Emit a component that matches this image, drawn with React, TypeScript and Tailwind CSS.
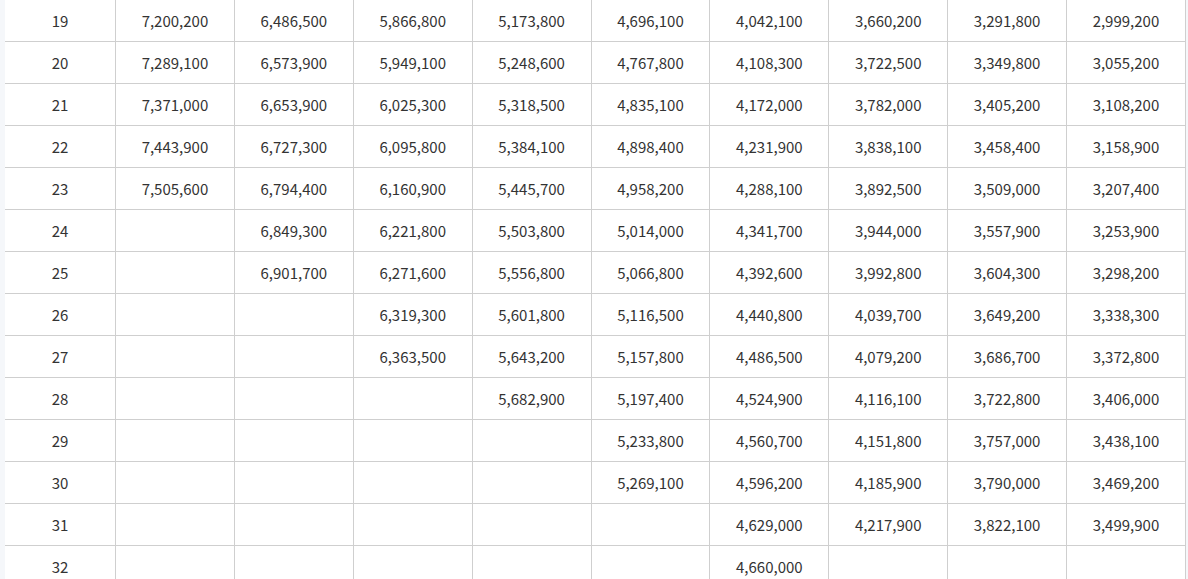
import React from 'react'

// 호봉별 금액 (빈 칸은 해당 호봉 없음)
const rows: [number, string[]][] = [
  [19, ['7,200,200', '6,486,500', '5,866,800', '5,173,800', '4,696,100', '4,042,100', '3,660,200', '3,291,800', '2,999,200']],
  [20, ['7,289,100', '6,573,900', '5,949,100', '5,248,600', '4,767,800', '4,108,300', '3,722,500', '3,349,800', '3,055,200']],
  [21, ['7,371,000', '6,653,900', '6,025,300', '5,318,500', '4,835,100', '4,172,000', '3,782,000', '3,405,200', '3,108,200']],
  [22, ['7,443,900', '6,727,300', '6,095,800', '5,384,100', '4,898,400', '4,231,900', '3,838,100', '3,458,400', '3,158,900']],
  [23, ['7,505,600', '6,794,400', '6,160,900', '5,445,700', '4,958,200', '4,288,100', '3,892,500', '3,509,000', '3,207,400']],
  [24, ['', '6,849,300', '6,221,800', '5,503,800', '5,014,000', '4,341,700', '3,944,000', '3,557,900', '3,253,900']],
  [25, ['', '6,901,700', '6,271,600', '5,556,800', '5,066,800', '4,392,600', '3,992,800', '3,604,300', '3,298,200']],
  [26, ['', '', '6,319,300', '5,601,800', '5,116,500', '4,440,800', '4,039,700', '3,649,200', '3,338,300']],
  [27, ['', '', '6,363,500', '5,643,200', '5,157,800', '4,486,500', '4,079,200', '3,686,700', '3,372,800']],
  [28, ['', '', '', '5,682,900', '5,197,400', '4,524,900', '4,116,100', '3,722,800', '3,406,000']],
  [29, ['', '', '', '', '5,233,800', '4,560,700', '4,151,800', '3,757,000', '3,438,100']],
  [30, ['', '', '', '', '5,269,100', '4,596,200', '4,185,900', '3,790,000', '3,469,200']],
  [31, ['', '', '', '', '', '4,629,000', '4,217,900', '3,822,100', '3,499,900']],
  [32, ['', '', '', '', '', '4,660,000', '', '', '']],
]

export default function App() {
  return (
    <div
      className="min-h-screen bg-[#f5f7fa] pl-[5px] text-[15px] text-[#333]"
      style={{ fontFamily: '"Noto Sans CJK KR", "Noto Sans", sans-serif' }}
    >
      <div className="grid w-[1181px] grid-cols-[111px_repeat(9,118.875px)] bg-white">
        {rows.map(([step, values]) => (
          <React.Fragment key={step}>
            <div className="flex h-[42px] items-center justify-center border-b border-r border-[#cfcfcf] pt-[2px]">
              {step}
            </div>
            {values.map((v, i) => (
              <div
                key={i}
                className="flex h-[42px] items-center justify-center border-b border-r border-[#cfcfcf] pt-[2px]"
              >
                {v}
              </div>
            ))}
          </React.Fragment>
        ))}
      </div>
    </div>
  )
}
